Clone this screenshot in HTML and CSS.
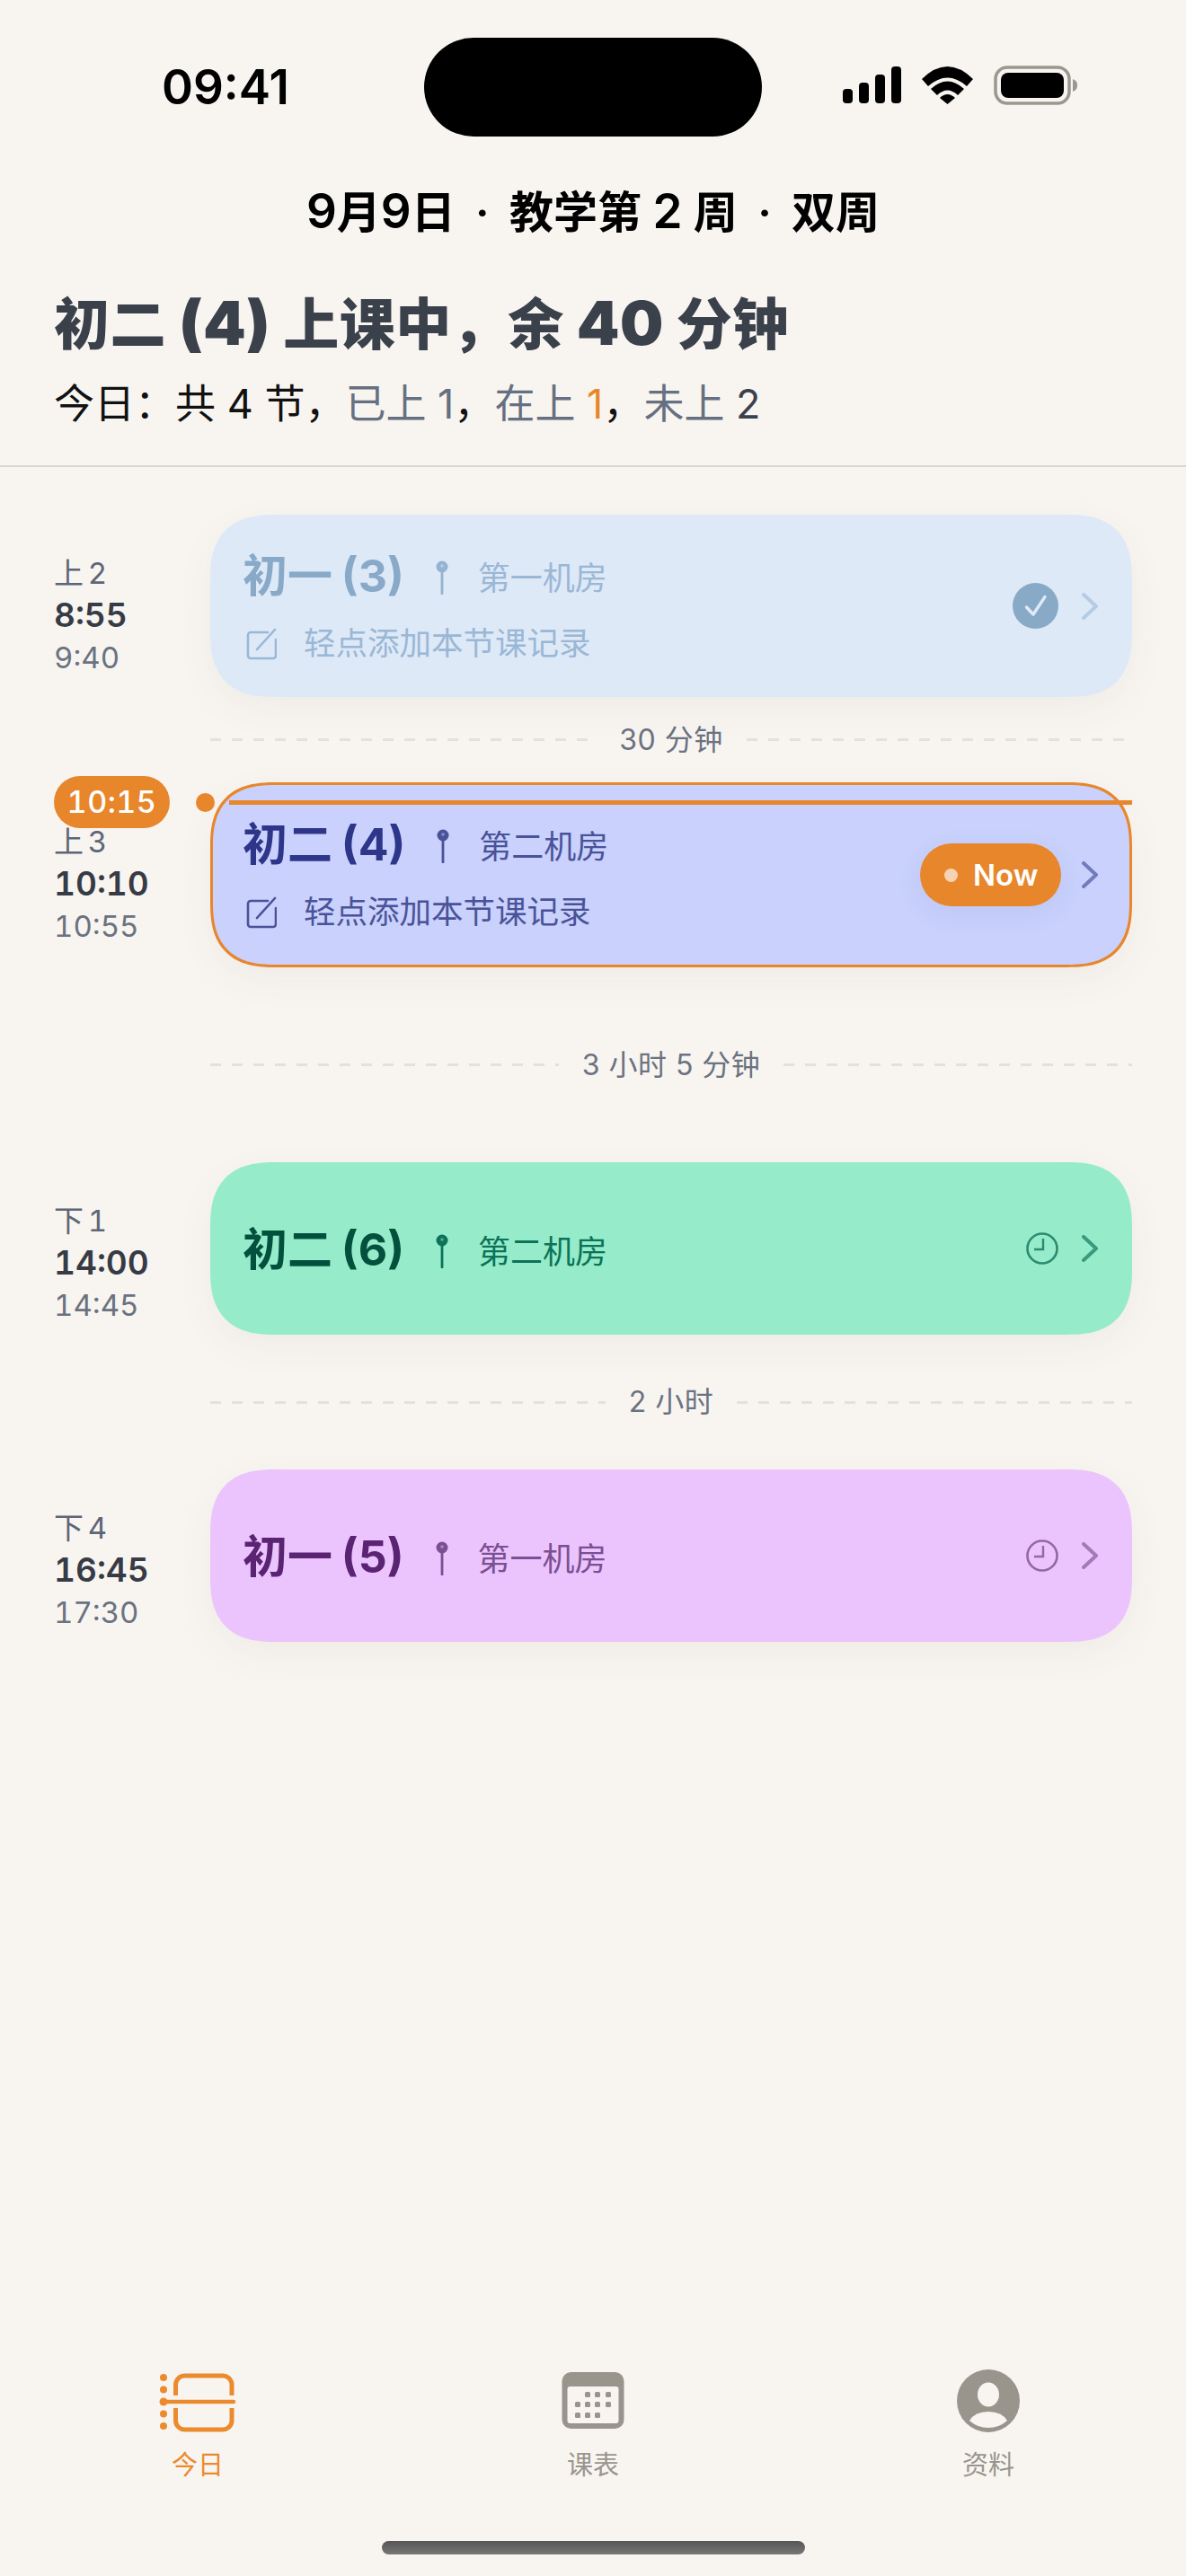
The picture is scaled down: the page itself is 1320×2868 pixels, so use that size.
FILE: index.html
```html
<!DOCTYPE html>
<html lang="zh-CN">
  <head>
    <meta charset="UTF-8" />
    <meta name="viewport" content="width=device-width, initial-scale=1.0" />
    <title>今日课程</title>
    <link rel="stylesheet" href="styles.css">
  </head>
  <body>
    <svg class="defs" width="0" height="0">
      <symbol id="pin" viewBox="0 0 14 38">
        <circle cx="7" cy="7" r="5.500" fill="currentColor" stroke="currentColor" stroke-width="2" />
        <circle cx="7" cy="6" r="1.800" fill="#fff" opacity="0.35" />
        <path d="M7 12V37" stroke="currentColor" stroke-width="2.800" stroke-linecap="round" />
      </symbol>
      <symbol id="note" viewBox="0 0 34 36">
        <path d="M24 5H5a3 3 0 0 0-3 3v23a3 3 0 0 0 3 3h25a3 3 0 0 0 3-3V13" fill="none" stroke="currentColor" stroke-width="2.600" stroke-linecap="round" />
        <path d="M12 24L32 2" fill="none" stroke="currentColor" stroke-width="2.600" stroke-linecap="round" />
      </symbol>
      <symbol id="chevron" viewBox="0 0 18 30">
        <path d="M2 2L16 15L2 28" fill="none" stroke="currentColor" stroke-width="4" stroke-linecap="round" stroke-linejoin="round" />
      </symbol>
      <symbol id="clock" viewBox="0 0 36 36">
        <circle cx="18" cy="18" r="16.500" fill="none" stroke="currentColor" stroke-width="2.600" />
        <path d="M19 7V19H9" fill="none" stroke="currentColor" stroke-width="2.400" />
      </symbol>
    </svg>

    <div class="screen">
      <div class="statusbar">
        <span class="clock-text">09:41</span>
        <div class="island"></div>
        <div class="status-icons">
          <svg width="66" height="42" viewBox="0 0 66 42">
            <rect x="1" y="25" width="11" height="16" rx="4" />
            <rect x="19" y="18" width="11" height="23" rx="4" />
            <rect x="37" y="9" width="11" height="32" rx="4" />
            <rect x="55" y="0" width="11" height="41" rx="4" />
          </svg>
          <svg width="57" height="42" viewBox="0 0 57 42">
            <path d="M0 14Q28.500 -14 57 14L50 22Q28.500 3 7 22Z" />
            <path d="M10 25Q28.500 8 47 25L40 32Q28.500 21 17 32Z" />
            <path d="M20 35Q28.500 27 37 35L28.500 42Z" />
          </svg>
          <svg width="94" height="44" viewBox="0 0 94 44">
            <rect x="2" y="2" width="82" height="40" rx="13" fill="none" stroke="#9a9791" stroke-width="3.500" />
            <rect x="8" y="8" width="70" height="28" rx="8" />
            <path d="M88 15a8 7 0 0 1 5 7a8 7 0 0 1-5 7Z" fill="#9a9791" />
          </svg>
        </div>
      </div>

      <div class="datebar"><span class="num">9</span>月<span class="num">9</span>日 <span class="sep">·</span> 教学第 <span class="num">2</span> 周 <span class="sep">·</span> 双周</div>

      <header class="summary">
        <h1>初二 <span class="num">(4)</span> 上课中，余 <span class="num">40</span> 分钟</h1>
        <p>今日：共 4 节，<span class="muted">已上 1</span>，<span class="muted">在上 </span><span class="accent">1</span>，<span class="muted">未上 </span><span class="strong">2</span></p>
      </header>

      <main class="timeline">
        <div class="row">
          <div class="times">
            <span class="period">上 2</span>
            <span class="start">8:55</span>
            <span class="end">9:40</span>
          </div>
          <div class="card card-done">
            <div class="card-body">
              <div class="card-title">
                <span class="name">初一 (3)</span>
                <svg class="pin"><use href="#pin" /></svg>
                <span class="room">第一机房</span>
              </div>
              <div class="card-note">
                <svg class="note"><use href="#note" /></svg>
                <span>轻点添加本节课记录</span>
              </div>
            </div>
            <svg class="done-badge" viewBox="0 0 51 51">
              <circle cx="25.500" cy="25.500" r="25.500" fill="#88aac6" />
              <path d="M15.500 27L23 35L36 15.500" fill="none" stroke="#dfeaf6" stroke-width="3.400" stroke-linecap="round" stroke-linejoin="round" />
            </svg>
            <svg class="chevron"><use href="#chevron" /></svg>
          </div>
        </div>

        <div class="gap gap-short"><span>30 分钟</span></div>

        <div class="row row-now">
          <div class="now-marker">
            <span class="now-time">10:15</span>
            <span class="now-dot"></span>
            <span class="now-line"></span>
          </div>
          <div class="times">
            <span class="period">上 3</span>
            <span class="start">10:10</span>
            <span class="end">10:55</span>
          </div>
          <div class="card card-now">
            <div class="card-body">
              <div class="card-title">
                <span class="name">初二 (4)</span>
                <svg class="pin"><use href="#pin" /></svg>
                <span class="room">第二机房</span>
              </div>
              <div class="card-note">
                <svg class="note"><use href="#note" /></svg>
                <span>轻点添加本节课记录</span>
              </div>
            </div>
            <span class="now-pill"><i></i>Now</span>
            <svg class="chevron"><use href="#chevron" /></svg>
          </div>
        </div>

        <div class="gap gap-long"><span>3 小时 5 分钟</span></div>

        <div class="row row-single">
          <div class="times">
            <span class="period">下 1</span>
            <span class="start">14:00</span>
            <span class="end">14:45</span>
          </div>
          <div class="card card-green">
            <div class="card-body">
              <div class="card-title">
                <span class="name">初二 (6)</span>
                <svg class="pin"><use href="#pin" /></svg>
                <span class="room">第二机房</span>
              </div>
            </div>
            <svg class="clock"><use href="#clock" /></svg>
            <svg class="chevron"><use href="#chevron" /></svg>
          </div>
        </div>

        <div class="gap gap-mid"><span>2 小时</span></div>

        <div class="row row-single">
          <div class="times">
            <span class="period">下 4</span>
            <span class="start">16:45</span>
            <span class="end">17:30</span>
          </div>
          <div class="card card-purple">
            <div class="card-body">
              <div class="card-title">
                <span class="name">初一 (5)</span>
                <svg class="pin"><use href="#pin" /></svg>
                <span class="room">第一机房</span>
              </div>
            </div>
            <svg class="clock"><use href="#clock" /></svg>
            <svg class="chevron"><use href="#chevron" /></svg>
          </div>
        </div>
      </main>

      <nav class="tabbar">
        <div class="tab tab-active">
          <svg width="88" height="70" viewBox="0 0 88 70">
            <g fill="currentColor">
              <circle cx="6" cy="9" r="4" />
              <circle cx="6" cy="22.500" r="4" />
              <circle cx="6" cy="36" r="4.500" />
              <circle cx="6" cy="49.500" r="4" />
              <circle cx="6" cy="63" r="4" />
            </g>
            <path d="M19.500 29V17a10 10 0 0 1 10-10H72a10 10 0 0 1 10 10V29M19.500 43V57a10 10 0 0 0 10 10H72a10 10 0 0 0 10-10V43" fill="none" stroke="currentColor" stroke-width="5" />
            <path d="M6 36H84" stroke="currentColor" stroke-width="4.500" stroke-linecap="round" />
          </svg>
          <span>今日</span>
        </div>
        <div class="tab">
          <svg width="70" height="70" viewBox="0 0 70 70">
            <rect x="0.500" y="3" width="69" height="63" rx="10" fill="currentColor" />
            <rect x="6.500" y="19" width="57" height="41" rx="3" fill="#f8f5f1" />
            <g fill="currentColor">
              <rect x="26" y="25" width="6" height="6" rx="1.500" />
              <rect x="37" y="25" width="6" height="6" rx="1.500" />
              <rect x="49" y="25" width="6" height="6" rx="1.500" />
              <rect x="15" y="36" width="6" height="6" rx="1.500" />
              <rect x="26" y="36" width="6" height="6" rx="1.500" />
              <rect x="37" y="36" width="6" height="6" rx="1.500" />
              <rect x="49" y="36" width="6" height="6" rx="1.500" />
              <rect x="15" y="48" width="6" height="6" rx="1.500" />
              <rect x="26" y="48" width="6" height="6" rx="1.500" />
              <rect x="37" y="48" width="6" height="6" rx="1.500" />
            </g>
          </svg>
          <span>课表</span>
        </div>
        <div class="tab">
          <svg width="70" height="70" viewBox="0 0 70 70">
            <circle cx="35" cy="35" r="35" fill="currentColor" />
            <ellipse cx="35" cy="28" rx="12" ry="13.500" fill="#f8f5f1" />
            <path d="M14 57Q20 47 35 47Q50 47 56 57Q47 65 35 65Q23 65 14 57Z" fill="#f8f5f1" />
          </svg>
          <span>资料</span>
        </div>
      </nav>

      <div class="home-bar"></div>
    </div>
  </body>
</html>
```

FILE: styles.css
```css
* {
  box-sizing: border-box;
}
body {
  margin: 0;
  background-color: #f8f5f1;
  font-family: Inter, "Noto Sans CJK SC", sans-serif;
}
.defs {
  position: absolute;
}
.screen {
  width: 1320px;
  height: 2868px;
  overflow: hidden;
  display: flex;
  flex-direction: column;
}

/* Status bar */
.statusbar {
  height: 152px;
  padding-top: 42px;
  display: flex;
  align-items: flex-start;
}
.clock-text {
  width: 472px;
  padding: 29px 0 0 180px;
  font-size: 53px;
  line-height: 52px;
  font-weight: 600;
  color: #000;
}
.island {
  width: 376px;
  height: 110px;
  border-radius: 55px;
  background-color: #000;
}
.status-icons {
  padding: 31px 0 0 89px;
  display: flex;
  align-items: flex-end;
  gap: 23px;
}
.status-icons svg:last-child {
  margin-bottom: -1px;
}

.datebar {
  margin-top: 56px;
  text-align: center;
  font-size: 49px;
  line-height: 54px;
  font-weight: 600;
  color: #000;
}
.datebar .num {
  font-size: 53px;
}
.datebar .sep {
  margin: 0 10px;
}

/* Summary */
.summary {
  padding: 62px 60px 40px;
  border-bottom: 2px solid #d9d7d2;
}
.summary h1 {
  margin: 0;
  font-size: 62px;
  line-height: 72px;
  font-weight: 800;
  letter-spacing: 0.500px;
  color: #3b414b;
}
.summary h1 .num {
  font-size: 68px;
  line-height: 60px;
  font-weight: 900;
}
.summary p {
  margin: 24px 0 0;
  font-size: 45px;
  line-height: 56px;
  color: #111;
}
.muted {
  color: #667080;
}
.accent {
  color: #e8862c;
}
.strong {
  color: #3b414b;
}

/* Timeline */
.timeline {
  padding: 53px 60px 0;
}
.row {
  position: relative;
  display: flex;
  align-items: center;
}
.times {
  width: 174px;
  flex: none;
  padding-top: 20px;
  display: flex;
  flex-direction: column;
  gap: 5px;
  font-size: 33px;
  line-height: 42px;
  font-variant-numeric: tabular-nums;
}
.row-single .times {
  padding-top: 32px;
}
.period {
  word-spacing: -4px;
  color: #5d6676;
}
.start {
  font-size: 37px;
  font-weight: 600;
  color: #363b45;
}
.end {
  color: #6b7280;
}

.card {
  flex: 1;
  height: 203px;
  padding: 0 38px 0 36px;
  display: flex;
  align-items: center;
  border-radius: 72px;
  corner-shape: superellipse(1.35);
  box-shadow: 0 14px 44px rgba(70, 60, 40, 0.05);
}
.card-body {
  flex: 1;
}
.row-single .card-body {
  padding-top: 2px;
}
.card-title {
  display: flex;
  align-items: center;
}
.name {
  font-size: 50px;
  line-height: 64px;
  font-weight: 700;
  word-spacing: -2px;
}
.pin {
  width: 14px;
  height: 38px;
  margin: 4px 33px 0 35px;
}
.room {
  margin-top: 6px;
  font-size: 36px;
  line-height: 48px;
}
.card-note {
  margin-top: 20px;
  display: flex;
  align-items: center;
  gap: 30px;
  font-size: 35.500px;
  line-height: 48px;
}
.note {
  width: 34px;
  height: 36px;
  margin-left: 4px;
}
.chevron {
  width: 18px;
  height: 30px;
  flex: none;
  margin-left: 26px;
}
.clock {
  width: 36px;
  height: 36px;
  flex: none;
}
.done-badge {
  width: 51px;
  height: 51px;
  flex: none;
}

.card-done {
  background-color: #dee9f7;
  color: #9ab7d6;
}
.card-done .name {
  color: #88aac8;
}
.card-done .pin {
  color: #94b3d2;
}
.card-done .chevron {
  color: #b6cce3;
}

.card-now {
  height: 206px;
  background-color: #c9d1fc;
  border: 3px solid #e8862c;
  color: #4a5399;
  padding: 0 35px 0 33px;
}
.card-now .name {
  color: #2e368a;
}
.card-now .chevron {
  color: #717cbc;
}

.row-single .card {
  height: 192px;
}
.card-green {
  background-color: #96ecca;
  color: #0c7358;
}
.card-green .name {
  color: #03503c;
}
.card-green .clock {
  color: #2b8b70;
}
.card-green .chevron {
  color: #3a9a7e;
}
.card-purple {
  background-color: #ebc4fd;
  color: #7b4f93;
}
.card-purple .name {
  color: #5a2473;
}
.card-purple .clock {
  color: #95689f;
}
.card-purple .chevron {
  color: #a579b8;
}

/* Current time marker sits over the row */
.now-marker {
  position: absolute;
  top: -7px;
  left: 0;
  right: 0;
  z-index: 1;
  display: flex;
  align-items: center;
}
.now-time {
  width: 129px;
  height: 58px;
  border-radius: 29px;
  background-color: #e8862c;
  text-align: center;
  font-size: 34px;
  line-height: 58px;
  font-weight: 500;
  font-variant-numeric: tabular-nums;
  letter-spacing: 0.500px;
  color: #fff;
}
.now-dot {
  width: 21px;
  height: 21px;
  margin-left: 29px;
  border-radius: 50%;
  background-color: #e8862c;
}
.now-line {
  flex: 1;
  height: 5px;
  margin-left: 16px;
  background-color: #e8862c;
}

.now-pill {
  width: 157px;
  height: 70px;
  flex: none;
  padding-left: 27px;
  display: flex;
  align-items: center;
  gap: 17px;
  border-radius: 35px;
  background-color: #e8862c;
  font-size: 33px;
  font-weight: 600;
  color: #fff;
  box-shadow: 0 8px 30px rgba(70, 80, 160, 0.08);
}
.now-pill i {
  width: 15px;
  height: 15px;
  border-radius: 50%;
  background-color: #f8d3b3;
}
.now-pill + .chevron {
  margin-left: 23px;
}

/* Free time between lessons */
.gap {
  margin-left: 174px;
  display: flex;
  align-items: center;
  gap: 26px;
  font-size: 32px;
  letter-spacing: 0.500px;
  color: #6b7280;
}
.gap span {
  margin-bottom: 6px;
}
.gap::before,
.gap::after {
  content: "";
  flex: 1;
  height: 3px;
  background-image: repeating-linear-gradient(90deg, #e3e1dd 0 12px, transparent 12px 24px);
}
.gap-short {
  height: 95px;
}
.gap-long {
  height: 217px;
}
.gap-mid {
  height: 150px;
}

/* Tab bar */
.tabbar {
  margin-top: auto;
  display: grid;
  grid-template-columns: repeat(3, 440px);
  justify-items: center;
}
.tab {
  display: flex;
  flex-direction: column;
  align-items: center;
  gap: 19px;
  font-size: 29px;
  line-height: 36px;
  color: #99958d;
}
.tab-active {
  color: #ec8a2e;
}
.home-bar {
  width: 471px;
  height: 15px;
  margin: 66px 0 24px 425px;
  border-radius: 8px;
  flex: none;
  background-image: linear-gradient(#555555, #777777);
}
```
